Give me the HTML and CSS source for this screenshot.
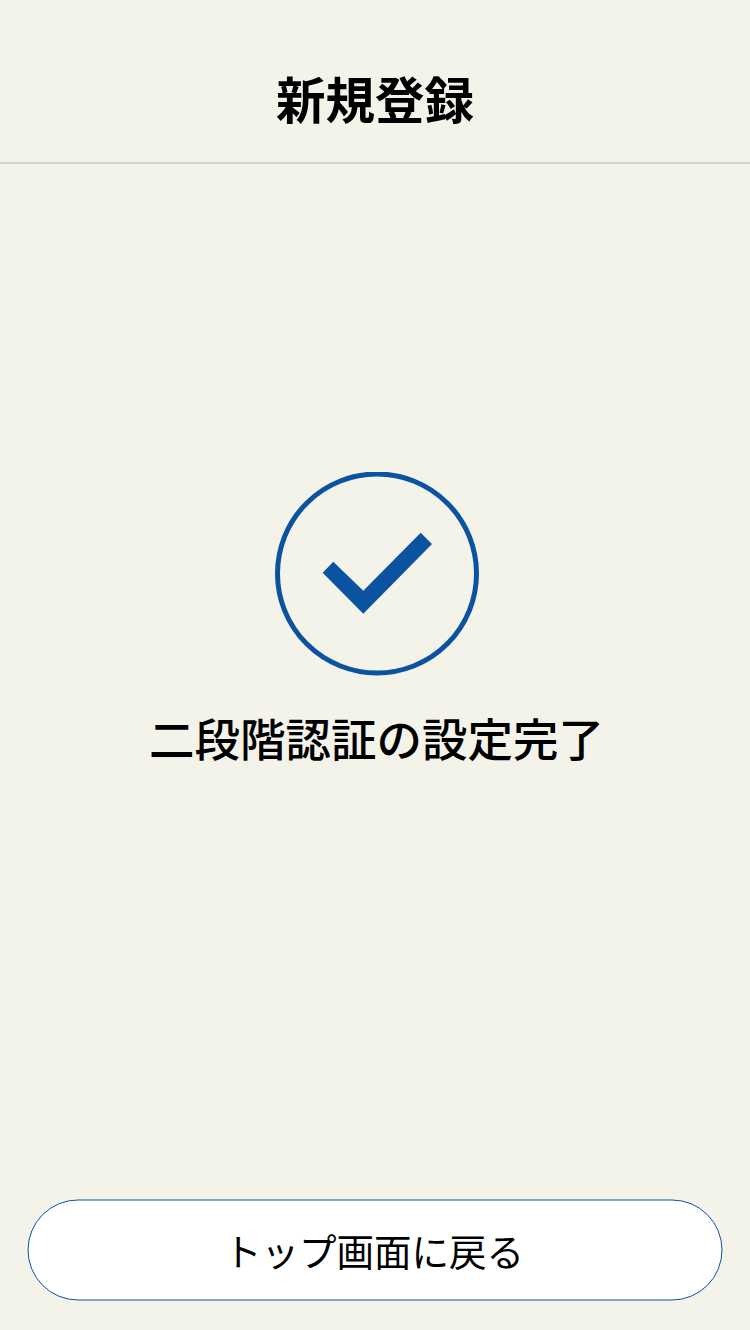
FILE: index.html
```
<!DOCTYPE html>
<html lang="ja">
<head>
<meta charset="utf-8">
<title>新規登録</title>
<link rel="stylesheet" href="styles.css">
</head>
<body>
<div class="page">
  <header class="header"><h1 class="title">新規登録</h1></header>
  <main class="main">
    <svg class="check" width="204" height="204" viewBox="0 0 204 204">
      <circle cx="102" cy="101.5" r="99.5" fill="none" stroke="#0b52a0" stroke-width="5"/>
      <path d="M47.7 100.7 L58.3 89.7 L88.3 118.7 L145.7 60.7 L157 72 L88.3 141.7 Z" fill="#0b52a0"/>
    </svg>
    <p class="message">二段階認証の設定完了</p>
  </main>
  <div class="footer">
    <a class="button">
      <svg class="button-shape" width="696" height="102" viewBox="0 0 696 102">
        <rect x="1" y="1" width="694" height="100" rx="50" ry="50" fill="#fff" stroke="#0b52a0" stroke-width="1"/>
      </svg>
      <span class="button-label">トップ画面に戻る</span>
    </a>
  </div>
</div>
</body>
</html>
```
FILE: styles.css
```
html, body { margin: 0; padding: 0; }
body { background: #f4f3ea; font-family: "Noto Sans CJK JP", sans-serif; color: #000; }
.page { width: 750px; height: 1330px; display: flex; flex-direction: column; }
.header { height: 128px; padding-top: 34px; border-bottom: 2px solid #d6d5ce; display: flex; align-items: center; justify-content: center; }
.title { margin: 0; font-size: 49.5px; font-weight: 700; line-height: 1; }
.main { flex: 1; display: flex; flex-direction: column; align-items: center; padding-top: 308px; }
.check { display: block; margin-left: 4px; }
.message { margin: 31px 0 0 3px; font-size: 45.5px; font-weight: 500; line-height: 60px; }
.footer { padding: 0 28px 30px; }
.button { position: relative; display: flex; align-items: center; justify-content: center; height: 98px; padding: 0 2px 2px 0; }
.button-shape { position: absolute; left: -1px; top: -1px; }
.button-label { position: relative; font-size: 37.5px; }
```
